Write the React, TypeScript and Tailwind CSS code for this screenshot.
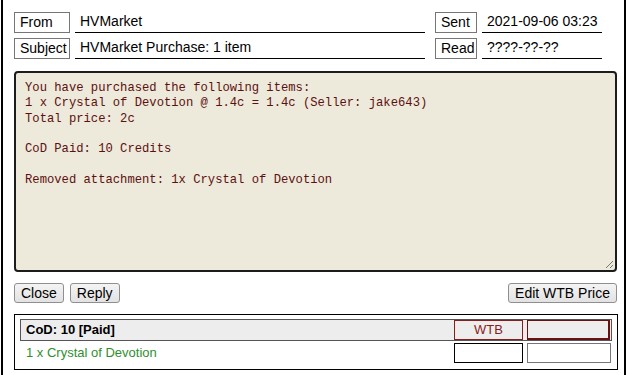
const bodyText = `You have purchased the following items:
1 x Crystal of Devotion @ 1.4c = 1.4c (Seller: jake643)
Total price: 2c

CoD Paid: 10 Credits

Removed attachment: 1x Crystal of Devotion`

function Label({ text, w }: { text: string; w: string }) {
  return (
    <div className={`${w} h-[21px] border border-[#767676] bg-white px-[5px] leading-[19px]`}>
      {text}
    </div>
  )
}

function Field({ value, w }: { value: string; w: string }) {
  return (
    <div className={`${w} h-[21px] border-b border-black pl-[5px] leading-[18px]`}>{value}</div>
  )
}

function Btn({ label }: { label: string }) {
  return (
    <button className="h-[20px] rounded-[3px] border border-[#8f8f8f] bg-gradient-to-b from-[#f4f4f4] to-[#e2e2e2] px-[6px] text-[14px] leading-[18px] text-black">
      {label}
    </button>
  )
}

export default function App() {
  return (
    <div className="h-[375px] w-[627px] overflow-hidden bg-white font-['Liberation_Sans',Arial,sans-serif] text-[14px] text-black">
      <div className="ml-px h-[375px] w-[625px] border-x-2 border-black pl-[11px] pr-[7px] pt-[12px]">
        <div className="flex flex-col gap-[5px]">
          <div className="flex items-start gap-[5px]">
            <Label text="From" w="w-[56px]" />
            <Field value="HVMarket" w="w-[350px]" />
            <div className="ml-[5px]">
              <Label text="Sent" w="w-[42px]" />
            </div>
            <Field value="2021-09-06 03:23" w="w-[120px]" />
          </div>
          <div className="flex items-start gap-[5px]">
            <Label text="Subject" w="w-[56px]" />
            <Field value="HVMarket Purchase: 1 item" w="w-[350px]" />
            <div className="ml-[5px]">
              <Label text="Read" w="w-[42px]" />
            </div>
            <Field value="????-??-??" w="w-[120px]" />
          </div>
        </div>

        <div className="relative mt-[12px] h-[201px] w-[603px] rounded-[4px] border-2 border-[#1c1c1c] bg-[#ede9db] px-[9px] pt-[8px]">
          <pre className="font-['Liberation_Mono',monospace] text-[12.2px] leading-[15.3px] text-[#5c1010]">
            {bodyText}
          </pre>
          <svg className="absolute bottom-[1px] right-[1px]" width="10" height="10" viewBox="0 0 10 10">
            <path d="M9 2 L2 9 M9 6 L6 9" stroke="#777" strokeWidth="1" />
          </svg>
        </div>

        <div className="mt-[11px] flex w-[603px] items-center justify-between">
          <div className="flex gap-[6px]">
            <Btn label="Close" />
            <Btn label="Reply" />
          </div>
          <Btn label="Edit WTB Price" />
        </div>

        <div className="mt-[11px] h-[56px] w-[604px] border border-black px-[5px] pt-[4px] text-[13px]">
          <div className="flex h-[22px] items-center border border-[#555] bg-[#ededed] pl-[5px] pr-[1px]">
            <span className="flex-1 font-bold">CoD: 10 [Paid]</span>
            <div className="h-[20px] w-[69px] border border-[#8b1c1c] text-center leading-[18px] text-[#8b1c1c]">WTB</div>
            <div className="ml-[4px] h-[20px] w-[83px] border border-[#6b1010] border-b-2 border-r-2" />
          </div>
          <div className="mt-[1px] flex h-[22px] items-center pl-[6px] pr-[1px]">
            <span className="flex-1 text-[#2f8f2f]">1 x Crystal of Devotion</span>
            <div className="h-[20px] w-[69px] border border-black" />
            <div className="ml-[4px] h-[20px] w-[84px] border border-[#777]" />
          </div>
        </div>
      </div>
    </div>
  )
}
